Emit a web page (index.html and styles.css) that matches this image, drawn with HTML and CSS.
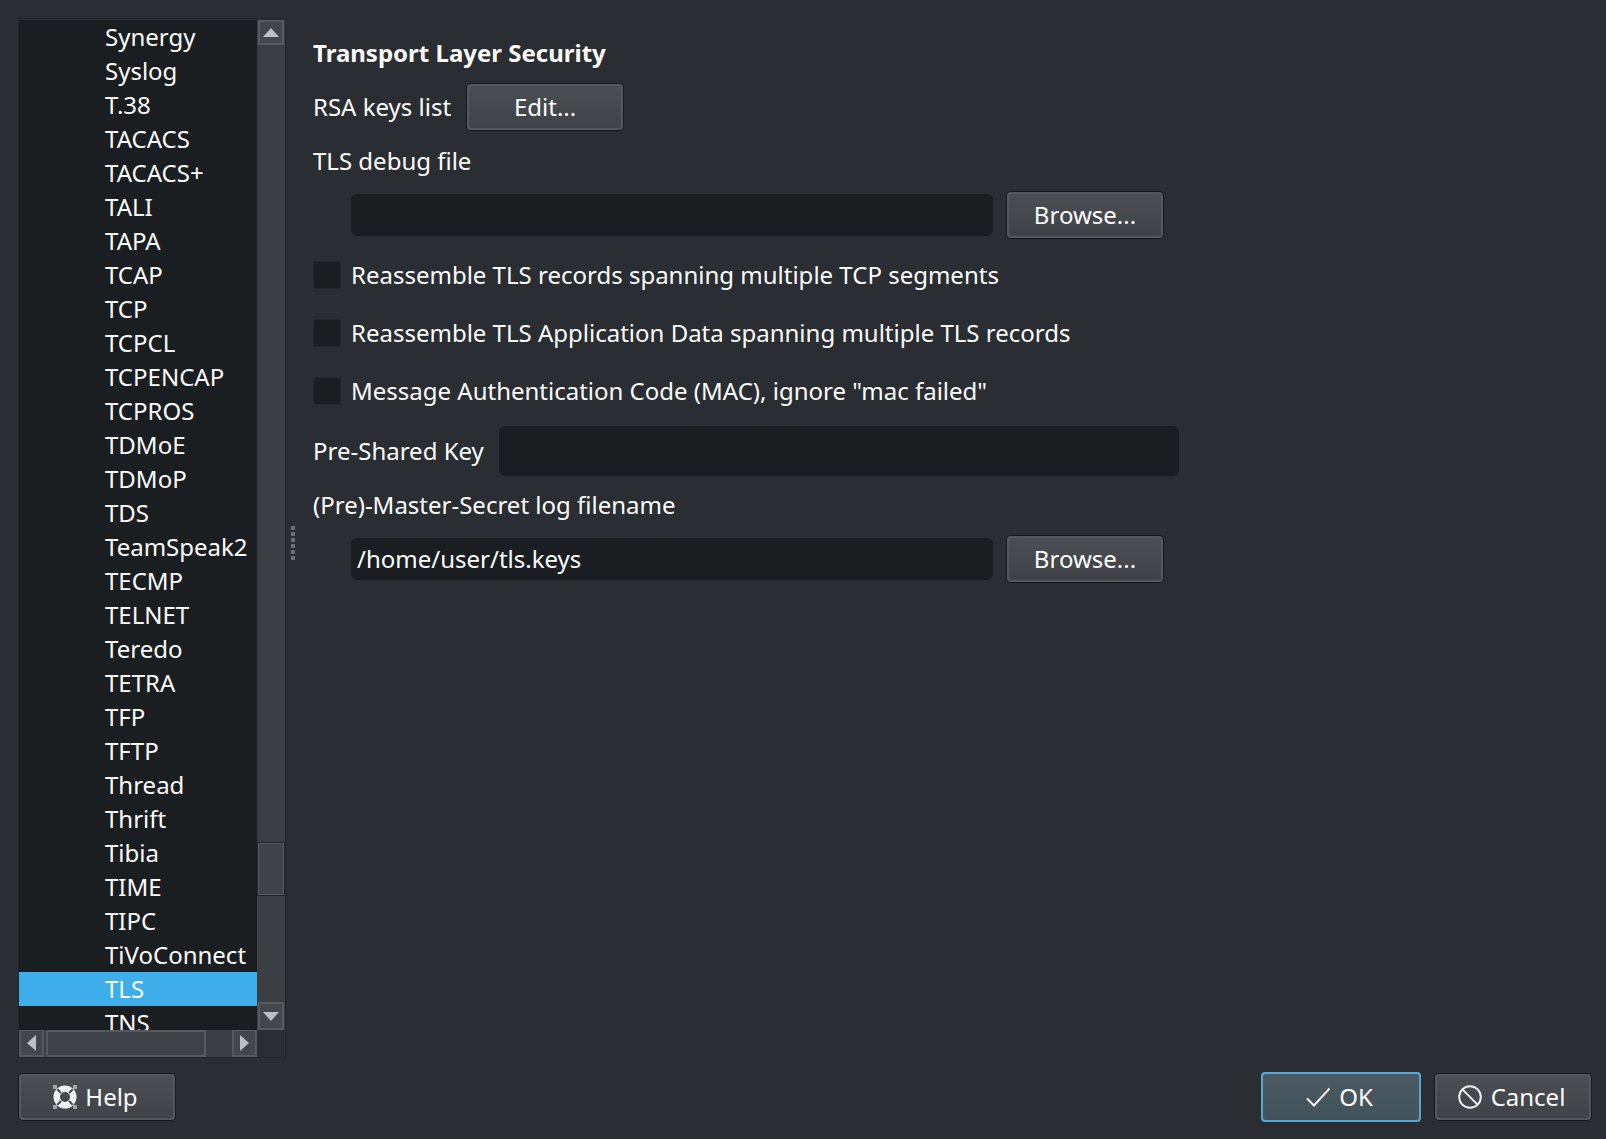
FILE: index.html
```html
<!DOCTYPE html>
<html lang="en">
<head>
<meta charset="utf-8">
<title>Preferences - TLS</title>
<link rel="stylesheet" href="styles.css">
</head>
<body>
<div class="dialog">
  <div class="top">
    <div class="tree-frame">
      <ul class="tree">
        <li>Synergy</li><li>Syslog</li><li>T.38</li><li>TACACS</li><li>TACACS+</li><li>TALI</li><li>TAPA</li><li>TCAP</li><li>TCP</li><li>TCPCL</li><li>TCPENCAP</li><li>TCPROS</li><li>TDMoE</li><li>TDMoP</li><li>TDS</li><li>TeamSpeak2</li><li>TECMP</li><li>TELNET</li><li>Teredo</li><li>TETRA</li><li>TFP</li><li>TFTP</li><li>Thread</li><li>Thrift</li><li>Tibia</li><li>TIME</li><li>TIPC</li><li>TiVoConnect</li><li class="selected">TLS</li><li>TNS</li>
      </ul>
      <div class="vbar">
        <div class="sb-btn sb-btn-v"><svg width="16" height="9" viewBox="0 0 16 9"><path d="M8 0 16 9H0Z"/></svg></div>
        <div class="v-track-a"></div>
        <div class="v-thumb"></div>
        <div class="v-track-b"></div>
        <div class="sb-btn sb-btn-v sb-btn-down"><svg width="16" height="9" viewBox="0 0 16 9"><path d="M0 0H16L8 9Z"/></svg></div>
      </div>
      <div class="hbar">
        <div class="sb-btn sb-btn-h"><svg width="9" height="16" viewBox="0 0 9 16"><path d="M9 0V16L0 8Z"/></svg></div>
        <div class="h-thumb"></div>
        <div class="h-track"></div>
        <div class="sb-btn sb-btn-h"><svg width="9" height="16" viewBox="0 0 9 16"><path d="M0 0 9 8 0 16Z"/></svg></div>
      </div>
      <div class="corner"></div>
    </div>
    <div class="splitter"><i></i><i></i><i></i><i></i><i></i><i></i></div>
    <div class="pane">
      <h1 class="title">Transport Layer Security</h1>
      <div class="row row-rsa"><span>RSA keys list</span><button class="btn">Edit...</button></div>
      <div class="label label-debug">TLS debug file</div>
      <div class="row row-file"><div class="input"></div><button class="btn">Browse...</button></div>
      <div class="check check-first"><span class="box"></span><span>Reassemble TLS records spanning multiple TCP segments</span></div>
      <div class="check"><span class="box"></span><span>Reassemble TLS Application Data spanning multiple TLS records</span></div>
      <div class="check"><span class="box"></span><span>Message Authentication Code (MAC), ignore "mac failed"</span></div>
      <div class="row row-psk"><span>Pre-Shared Key</span><div class="input input-psk"></div></div>
      <div class="label label-master">(Pre)-Master-Secret log filename</div>
      <div class="row row-file row-file-2"><div class="input">/home/user/tls.keys</div><button class="btn">Browse...</button></div>
    </div>
  </div>
  <div class="bottom">
    <button class="btn btn-icon btn-help">
      <svg width="24" height="24" viewBox="0 0 24 24"><path class="corners" d="M0 0H4V4H0ZM20 0H24V4H20ZM0 20H4V24H0ZM20 20H24V24H20Z"/><path class="fill" fill-rule="evenodd" d="M12 0.500A11.500 11.500 0 1 1 12 23.500 11.500 11.500 0 1 1 12 0.500ZM12 7A5 5 0 1 0 12 17 5 5 0 1 0 12 7Z"/><path class="cut" d="M4.300 4.300 8 8M19.700 4.300 16 8M4.300 19.700 8 16M19.700 19.700 16 16"/></svg>
      <span>Help</span>
    </button>
    <div class="spacer"></div>
    <button class="btn btn-icon btn-default">
      <svg width="24" height="24" viewBox="0 0 24 24"><path class="stroke" d="M1 13.500 8 20.500 23.500 3.500"/></svg>
      <span>OK</span>
    </button>
    <button class="btn btn-icon btn-cancel">
      <svg width="24" height="24" viewBox="0 0 24 24"><circle class="stroke" cx="12" cy="12" r="10.800"/><path class="stroke" d="M4.400 4.400 19.600 19.600"/></svg>
      <span>Cancel</span>
    </button>
  </div>
</div>
</body>
</html>
```

FILE: styles.css
```css
* { box-sizing: border-box; }
html, body { margin: 0; padding: 0; }
body {
  width: 1606px;
  height: 1139px;
  overflow: hidden;
  background: #2a2e32;
  color: #fcfcfc;
  font-family: "Noto Sans", sans-serif;
  font-size: 24px;
  line-height: 34px;
}
.dialog { display: flex; flex-direction: column; height: 100%; padding: 18px 15px 18px 18px; }
.top { display: flex; height: 1040px; }

/* tree */
.tree-frame {
  width: 268px;
  height: 100%;
  display: grid;
  grid-template-columns: 238px 28px;
  grid-template-rows: 1011px 27px;
  border: 1px solid #232629;
  background: #2a2e32;
}
.tree { margin: 1px 0 0; padding: 0; list-style: none; overflow: hidden; background: #1b1e20; height: 1010px; }
.tree li { height: 34px; padding-left: 86px; white-space: nowrap; }
.tree li.selected { background: #3daee9; }

/* scrollbars */
.vbar { display: flex; flex-direction: column; background: #3b3f44; margin-top: 1px; }
.hbar { display: flex; background: #3b3f44; }
.corner { background: #2a2e32; }
.sb-btn { display: flex; align-items: center; justify-content: center; background: #43474c; border: 2px solid #565a5f; flex: none; }
.sb-btn svg path { fill: #bdc0c2; }
.sb-btn-v { height: 25px; width: 26px; margin-left: 1px; }
.sb-btn-down { height: 28px; }
.sb-btn-h { width: 25px; height: 27px; border-top-width: 1px; }
.v-track-a { height: 795px; margin-top: 2px; flex: none; background: linear-gradient(90deg,#33373b 0,#3b3f44 3px); }
.v-thumb { height: 54px; flex: none; background: #3f4348; border: 2px solid #565a5f; outline: 1px solid #232629; outline-offset: -1px; }
.v-track-b { flex: 1; margin-bottom: 2px; }
.h-thumb { width: 160px; flex: none; margin-left: 2px; background: #3f4348; border: 2px solid #565a5f; }
.h-track { flex: 1; margin-left: 2px; }

/* splitter */
.splitter { width: 27px; flex: none; padding: 508px 0 0 5px; display: flex; flex-direction: column; gap: 2px; }
.splitter i { display: block; width: 4px; height: 4px; flex: none; background: #6b6f73; }

/* right pane */
.pane { flex: 1; }
.title { margin: 17px 0 0; font-size: 24px; font-weight: 700; line-height: 36px; }
.row { display: flex; align-items: center; }
.row-rsa { margin-top: 12px; height: 48px; gap: 16px; }
.label-debug { margin-top: 13px; }
.label-master { margin-top: 12px; }
.row-file { margin-top: 13px; height: 48px; padding-left: 38px; }
.row-file .btn { margin-left: 14px; }
.btn {
  flex: none;
  width: 156px;
  height: 46px;
  padding: 0;
  font: inherit;
  color: inherit;
  background: linear-gradient(180deg, #4b4f54, #3f4348);
  border: 2px solid #54585c;
  border-radius: 4px;
  box-shadow: 0 0 0 1px #181a1c;
  display: flex;
  align-items: center;
  justify-content: center;
}
.input {
  flex: none;
  width: 642px;
  height: 42px;
  background: #1b1e20;
  border-radius: 6px;
  padding-left: 6px;
  line-height: 42px;
}
.input-psk { width: 680px; height: 50px; margin-left: 15px; }
.check { display: flex; align-items: center; height: 34px; margin-top: 24px; gap: 10px; }
.check-first { margin-top: 19px; }
.box { width: 26px; height: 26px; margin: 0 1px; background: #1b1e20; border-radius: 2px; box-shadow: 0 0 0 1px #23262a; flex: none; }
.row-psk { margin-top: 18px; height: 50px; }

/* bottom */
.bottom { display: flex; align-items: center; margin-top: 15px; gap: 14px; height: 48px; }
.spacer { flex: 1; }
.btn-icon { gap: 9px; padding-right: 3px; }
.btn-help { margin-left: 1px; gap: 8px; }
.btn-default { width: 160px; height: 50px; background: linear-gradient(180deg, #4b5a63, #42525b); border-color: #57a7d6; box-shadow: none; }
.fill { fill: #eff0f1; }
.cut { stroke: #43474c; stroke-width: 2; fill: none; }
.corners { fill: #eff0f1; opacity: .55; }
.stroke { stroke: #eff0f1; stroke-width: 2; fill: none; }
```
